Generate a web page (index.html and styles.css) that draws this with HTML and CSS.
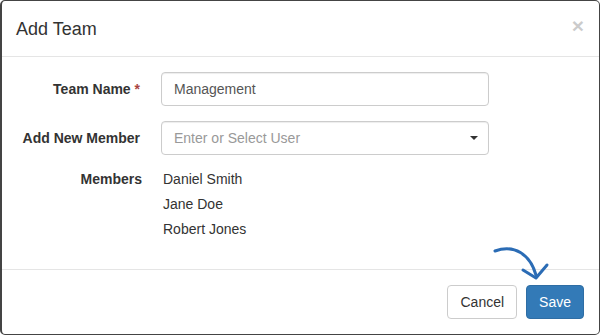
FILE: index.html
```html
<!DOCTYPE html>
<html lang="en">
<head>
    <meta charset="UTF-8">
    <title>Add Team</title>
    <link rel="stylesheet" href="styles.css">
</head>
<body>
    <!-- Add Team Modal -->
    <div class="modal">
        <div class="modal-header">
            <h4 class="modal-title">Add Team</h4>
            <span class="close">&times;</span>
        </div>

        <div class="modal-body">
            <div class="form-row">
                <label class="form-label">Team Name <span class="required">*</span></label>
                <div class="form-control">Management</div>
            </div>

            <div class="form-row">
                <label class="form-label">Add New Member</label>
                <div class="form-control select">
                    <span class="placeholder">Enter or Select User</span>
                    <span class="caret"></span>
                </div>
            </div>

            <div class="form-row members-row">
                <label class="form-label">Members</label>
                <ul class="members">
                    <li>Daniel Smith</li>
                    <li>Jane Doe</li>
                    <li>Robert Jones</li>
                </ul>
            </div>
        </div>

        <div class="modal-footer">
            <button class="btn btn-default">Cancel</button>
            <button class="btn btn-primary">Save</button>
        </div>

        <!-- hint arrow pointing to Save -->
        <svg class="hint-arrow" width="64" height="42" viewBox="488 242 64 42">
            <path d="M495 251 C 514 244, 530 254, 536 275" fill="none" stroke="#2b6cb5" stroke-width="3" stroke-linecap="round"/>
            <path d="M523 270 L536 278 L547 265" fill="none" stroke="#2b6cb5" stroke-width="3" stroke-linecap="round" stroke-linejoin="round"/>
        </svg>
    </div>
</body>
</html>
```

FILE: styles.css
```css
/* General styling */
* {
    margin: 0;
    padding: 0;
    box-sizing: border-box;
}
html, body {
    width: 600px;
    height: 335px;
    background-color: #fff;
}
body {
    font-family: 'Liberation Sans', Arial, sans-serif;
    font-size: 14px;
    line-height: 20px;
    color: #333;
}

/* Modal */
.modal {
    position: relative;
    width: 600px;
    height: 335px;
    border: 1px solid #444;
    border-left-width: 2px;
    border-radius: 5px;
    background-color: #fff;
}
.modal-header {
    display: flex;
    justify-content: space-between;
    align-items: center;
    height: 56px;
    padding: 0 15px 0 14px;
    border-bottom: 1px solid #e5e5e5;
}
.modal-title {
    font-size: 18px;
    font-weight: normal;
    line-height: 26px;
    color: #333;
}
.close {
    font-size: 21px;
    font-weight: bold;
    color: #000;
    opacity: 0.2;
    line-height: 1;
    margin-top: -6px;
}

/* Form */
.modal-body {
    padding: 15px;
    height: 212px;
}
.form-row {
    display: grid;
    grid-template-columns: 123px 328px;
    column-gap: 21px;
    margin-bottom: 15px;
}
.form-label {
    font-weight: bold;
    text-align: right;
    padding-top: 7px;
}
.required {
    color: #a94442;
}
.form-control {
    display: flex;
    align-items: center;
    justify-content: space-between;
    height: 34px;
    padding: 6px 12px;
    border: 1px solid #ccc;
    border-radius: 4px;
    box-shadow: inset 0 1px 1px rgba(0, 0, 0, 0.075);
    color: #555;
}
.placeholder {
    color: #999;
}
.caret {
    width: 0;
    height: 0;
    border-top: 4px solid #333;
    border-left: 4px solid transparent;
    border-right: 4px solid transparent;
    margin-right: -2px;
}
.members-row {
    margin-top: -1px;
}
.members-row .form-label {
    padding-top: 0;
    margin-right: -2px;
}
.members {
    list-style: none;
    padding-left: 2px;
}
.members li {
    margin-bottom: 5px;
}

/* Footer */
.modal-footer {
    display: flex;
    justify-content: flex-end;
    gap: 9px;
    padding: 15px;
    border-top: 1px solid #e5e5e5;
}
.btn {
    font-family: 'Liberation Sans', Arial, sans-serif;
    font-size: 14px;
    line-height: 20px;
    padding: 6px 12px;
    border: 1px solid #ccc;
    border-radius: 4px;
    background-color: #fff;
    color: #333;
    cursor: pointer;
}
.btn-primary {
    background-color: #337ab7;
    border-color: #2e6da4;
    color: #fff;
}

.hint-arrow {
    position: absolute;
    left: 486px;
    top: 241px;
}
```
